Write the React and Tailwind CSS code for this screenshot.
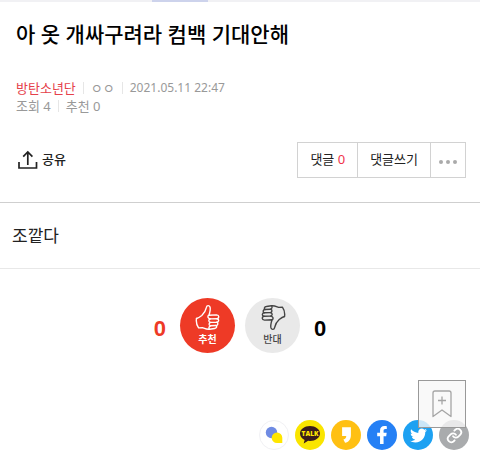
import { FaFacebookF, FaTwitter } from 'react-icons/fa';

function Divider() {
  return <span className="mx-[7px] h-3 w-px bg-[#e6e6e6]" />;
}

function ShareIcon() {
  return (
    <svg width="20" height="20" viewBox="0 0 20 20" fill="none" stroke="#222" strokeWidth="1.7">
      <path d="M1 12v6h17.500v-6" />
      <path d="M9.800 15V2.200M5.200 6.600l4.600-4.600 4.600 4.600" />
    </svg>
  );
}

// Fist with a raised thumb; the dislike button turns it upside down.
function ThumbIcon({ className }) {
  return (
    <svg
      width="26"
      height="27"
      viewBox="0 0 26 27"
      fill="none"
      stroke="currentColor"
      strokeWidth="1.4"
      strokeLinejoin="round"
      strokeLinecap="round"
      className={className}
    >
      <path d="M1.500 14.500C3.500 14 5 12.900 6.800 11.500C9.500 9.200 10.800 6.500 11.500 3.200C11.800 1.200 14.300 1.200 15 3C15.800 5.200 14.900 8.300 14 11.300L21.500 10.900C24.400 11 24.500 14.300 22 14.700" />
      <path d="M15.500 14.900L22 14.700C24.500 15.200 24.100 18 21.600 18.200L15.700 18.400" />
      <path d="M21.600 18.200C23.700 18.900 23 21.400 20.900 21.500L15.500 21.800" />
      <path d="M20.900 21.500C22.300 22.500 21.500 24.300 19.700 24.500L14.500 25.200C11.500 25.500 9.500 24.300 7.500 23.600L3.600 23.900C1.500 21 1 17.500 1.500 14.500" />
      <path d="M14 11.300C12.400 11.700 12.200 14.300 15.500 14.900C13.200 15.400 13.200 17.900 15.700 18.400C13.600 19 13.500 21.300 15.500 21.800C13.800 22.400 13.500 24.300 14.500 25.200" />
    </svg>
  );
}

function ChatDotsIcon() {
  return (
    <svg width="18" height="18" viewBox="0 0 18 18">
      <circle cx="6.500" cy="6.500" r="5.700" fill="#6f8be3" />
      <path d="M12 6.500a5.300 5.300 0 1 0 0 10.600h5.300v-5.300A5.300 5.300 0 0 0 12 6.500z" fill="#ffe600" />
    </svg>
  );
}

function TalkIcon() {
  return (
    <svg width="22" height="20" viewBox="0 0 22 20">
      <path
        d="M11 1C5.500 1 1 4.300 1 8.500c0 2.700 1.800 5 4.600 6.400L4.700 18.600l4.400-2.800 1.900.2c5.500 0 10-3.300 10-7.500S16.500 1 11 1z"
        fill="#3a1c1c"
      />
      <text x="11" y="11" textAnchor="middle" fill="#ffe600" fontSize="6.500" fontWeight="800" fontFamily="Open Sans, sans-serif">
        TALK
      </text>
    </svg>
  );
}

function StoryIcon() {
  return (
    <svg width="11" height="18" viewBox="0 0 10 16">
      <path d="M1 1h8v7c0 4-2 6.500-5.300 7L2.200 12.200C4 11.700 4.700 10.800 4.800 9H1z" fill="#fff" />
    </svg>
  );
}

function LinkIcon() {
  return (
    <svg width="17" height="17" viewBox="0 0 24 24" fill="none" stroke="#fff" strokeWidth="2.600" strokeLinecap="round">
      <path d="M10 13a5 5 0 0 0 7.500.5l3-3a5 5 0 0 0-7-7L11.800 5.200" />
      <path d="M14 11a5 5 0 0 0-7.500-.5l-3 3a5 5 0 0 0 7 7l1.700-1.700" />
    </svg>
  );
}

const shareLinks = [
  { label: '채팅', className: 'border border-[#f1f1f4] bg-white', icon: <ChatDotsIcon /> },
  { label: '카카오톡', className: 'bg-[#fae500]', icon: <TalkIcon /> },
  { label: '카카오스토리', className: 'bg-[#ffc013]', icon: <StoryIcon /> },
  { label: '페이스북', className: 'bg-[#2580f5]', icon: <FaFacebookF size={18} color="#fff" /> },
  { label: '트위터', className: 'bg-[#1da1f2]', icon: <FaTwitter size={17} color="#fff" /> },
  { label: '주소 복사', className: 'bg-[#a9abad]', icon: <LinkIcon /> },
];

export default function App() {
  return (
    <div className="bg-white font-['Noto_Sans','Noto_Sans_CJK_KR',sans-serif] text-[#222]">
      <div className="flex h-0.5 justify-start bg-[#f1f1f4] pl-[152px]">
        <span className="w-14 bg-[#cdd3ec]" />
      </div>

      <header className="border-b border-[#cfcfcf] pt-[17px] pr-3.5 pb-6 pl-4">
        <h1 className="text-[21px] leading-[30px] font-medium text-black">아 옷 개싸구려라 컴백 기대안해</h1>

        <div className="mt-[30px] text-[13px] leading-[18px] text-[#999]">
          <div className="flex items-center">
            <a href="#board" className="text-[#e5404a]">방탄소년단</a>
            <Divider />
            <span>ㅇㅇ</span>
            <Divider />
            <time className="text-xs leading-[18px]">2021.05.11 22:47</time>
          </div>
          <div className="flex items-center">
            <span>조회 4</span>
            <Divider />
            <span>추천 0</span>
          </div>
        </div>

        <div className="mt-[27px] flex items-center justify-between">
          <button type="button" className="flex items-center gap-1 pl-0.5 text-[13px] font-medium">
            <ShareIcon />
            공유
          </button>
          <div className="flex h-9 divide-x divide-[#d2d2d2] border border-[#d2d2d2] text-[13px]">
            <button type="button" className="px-3">
              댓글 <span className="text-[#f0334b]">0</span>
            </button>
            <button type="button" className="px-3">댓글쓰기</button>
            <button type="button" aria-label="더보기" className="flex w-[34px] items-center justify-center gap-[3px] pt-1">
              <span className="size-1 rounded-full bg-[#aaa]" />
              <span className="size-1 rounded-full bg-[#aaa]" />
              <span className="size-1 rounded-full bg-[#aaa]" />
            </button>
          </div>
        </div>
      </header>

      <p className="border-b border-[#e8e8e8] px-3 py-5 text-[17px] leading-[25px]">조깥다</p>

      <div className="mt-[29px] flex items-center justify-center">
        <span className="mr-3.5 pt-1.5 font-['Liberation_Sans',sans-serif] text-[22px] font-bold text-[#ee3a26]">0</span>
        <button
          type="button"
          className="flex size-[55px] flex-col items-center rounded-full bg-[#ee3a26] pt-1.5 text-[10px] leading-[16px] font-bold text-white"
        >
          <ThumbIcon />
          추천
        </button>
        <button
          type="button"
          className="ml-2.5 flex size-[55px] flex-col items-center rounded-full bg-[#e9e9e9] pt-1.5 text-[10px] leading-[16px] font-medium text-[#444]"
        >
          <ThumbIcon className="rotate-180" />
          반대
        </button>
        <span className="ml-3.5 pt-1.5 font-['Liberation_Sans',sans-serif] text-[22px] font-bold text-black">0</span>
      </div>

      <div className="relative mt-[67px] flex justify-end gap-1.5 pr-[11px] pb-[18px]">
        {shareLinks.map((link) => (
          <a
            key={link.label}
            href="#share"
            aria-label={link.label}
            className={`flex size-[30px] items-center justify-center rounded-full ${link.className}`}
          >
            {link.icon}
          </a>
        ))}
        <button
          type="button"
          aria-label="스크랩"
          className="absolute -top-10 right-3.5 flex size-12 items-center justify-center border border-[#999] bg-[#f8f8f8]/80"
        >
          <svg width="20" height="28" viewBox="0 0 20 28" fill="none" stroke="#a5a5a5" strokeWidth="1.300">
            <path d="M1 3a2 2 0 0 1 2-2h14a2 2 0 0 1 2 2v23.500l-9-6.500-9 6.500z" strokeLinejoin="round" />
            <path d="M10 6.500v8M6 10.500h8" />
          </svg>
        </button>
      </div>
    </div>
  );
}
